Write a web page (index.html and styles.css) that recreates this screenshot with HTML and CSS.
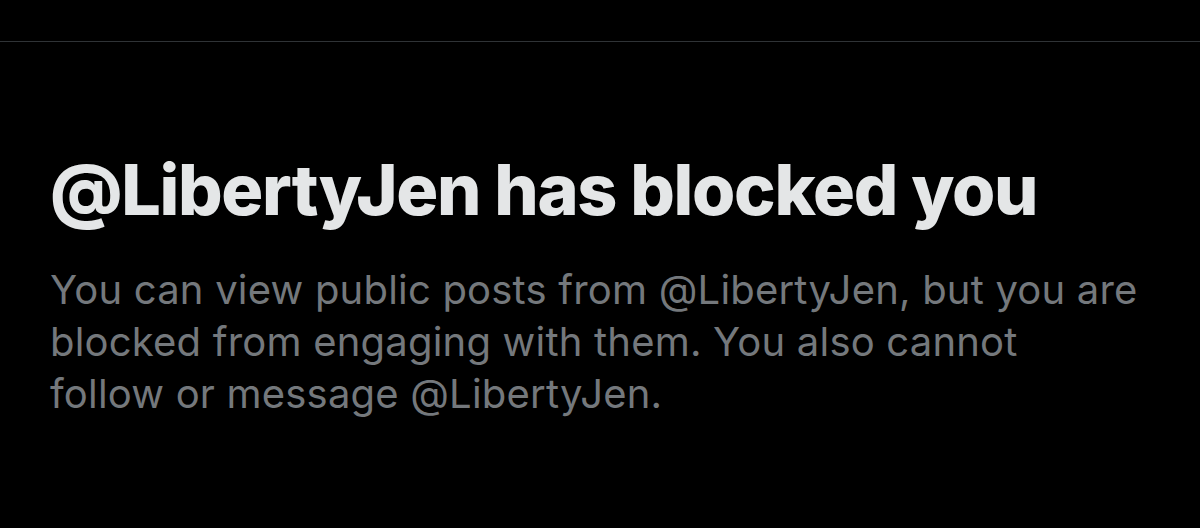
FILE: index.html
```html
<!DOCTYPE html>
<html lang="en">
<head>
<meta charset="utf-8">
<title>Blocked</title>
<link rel="stylesheet" href="styles.css">
</head>
<body>
<div class="page">
  <div class="divider"></div>
  <section class="notice">
    <h1 class="notice-title">@LibertyJen has blocked you</h1>
    <p class="notice-text">You can view public posts from @LibertyJen, but you are blocked from engaging with them. You also cannot<br>follow or message @LibertyJen.</p>
  </section>
</div>
</body>
</html>
```
FILE: styles.css
```css
html, body {
  margin: 0;
  padding: 0;
  background: #000;
}
.page {
  width: 1200px;
  height: 528px;
  overflow: hidden;
  background: #000;
  font-family: Inter, "Noto Sans", "Liberation Sans", sans-serif;
}
.divider {
  margin-top: 41px;
  height: 1px;
  background: #2f3336;
}
.notice {
  padding: 0 40px 0 50px;
}
.notice-title {
  margin: 106px 0 0;
  font-size: 70px;
  font-weight: 800;
  line-height: 84px;
  color: #e4e6e7;
  letter-spacing: -1.3px;
}
.notice-text {
  margin: 32px 0 0;
  font-size: 40px;
  font-weight: 400;
  line-height: 52px;
  color: #74787c;
  letter-spacing: 0.2px;
  max-width: 1100px;
}
```
